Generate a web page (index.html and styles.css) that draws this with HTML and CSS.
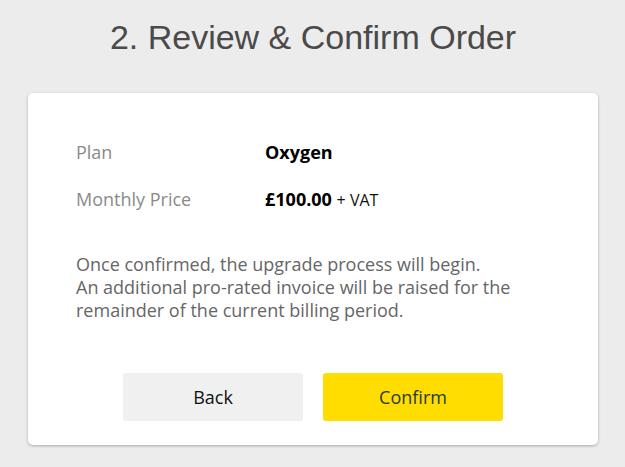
FILE: index.html
```html
<!DOCTYPE html>
<html lang="en">
<head>
<meta charset="utf-8">
<title>Review &amp; Confirm Order</title>
<link rel="stylesheet" href="styles.css">
</head>
<body>
<main class="page">
  <h1 class="title">2. Review &amp; Confirm Order</h1>
  <section class="card">
    <div class="summary">
      <div class="label">Plan</div>
      <div class="value"><strong>Oxygen</strong></div>
      <div class="label">Monthly Price</div>
      <div class="value"><strong>£100.00</strong> <span class="tax">+ VAT</span></div>
    </div>
    <p class="note">Once confirmed, the upgrade process will begin.<br>An additional pro-rated invoice will be raised for the remainder of the current billing period.</p>
    <div class="actions">
      <button class="btn btn-back" type="button">Back</button>
      <button class="btn btn-confirm" type="button">Confirm</button>
    </div>
  </section>
</main>
</body>
</html>
```

FILE: styles.css
```css
* { box-sizing: border-box; }
html, body { margin: 0; padding: 0; }
body {
  background: #ececec;
  font-family: "Open Sans", "Liberation Sans", sans-serif;
  width: 625px;
  height: 467px;
  overflow: hidden;
}
.page {
  padding: 17px 27px 0 28px;
}
.title {
  margin: 0;
  font-family: "Liberation Sans", Arial, sans-serif;
  font-weight: 400;
  font-size: 34px;
  line-height: 41px;
  color: #4a4a4a;
  text-align: center;
}
.card {
  margin-top: 35px;
  background: #fff;
  border-radius: 5px;
  box-shadow: 0 1px 3px rgba(0,0,0,0.28);
  padding: 46px 48px 24px 48px;
}
.summary {
  display: grid;
  grid-template-columns: 189px 1fr;
  grid-auto-rows: 26px;
  row-gap: 21px;
  font-size: 18px;
  line-height: 26px;
}
.label { color: #8a8a8a; }
.value { color: #111; }
.value strong { font-weight: 700; color: #000; }
.tax { font-size: 16px; }
.note {
  margin: 41px 0 0 0;
  font-size: 18px;
  line-height: 23px;
  color: #666;
  max-width: 470px;
}
.actions {
  display: flex;
  justify-content: center;
  gap: 20px;
  margin-top: 51px;
}
.btn {
  width: 180px;
  height: 48px;
  border: 0;
  border-radius: 3px;
  font-family: "Open Sans", "Liberation Sans", sans-serif;
  font-size: 18px;
  cursor: pointer;
}
.btn-back { background: #f0f0f0; color: #111; }
.btn-confirm { background: #ffdd00; color: #2a3a2a; }
```
